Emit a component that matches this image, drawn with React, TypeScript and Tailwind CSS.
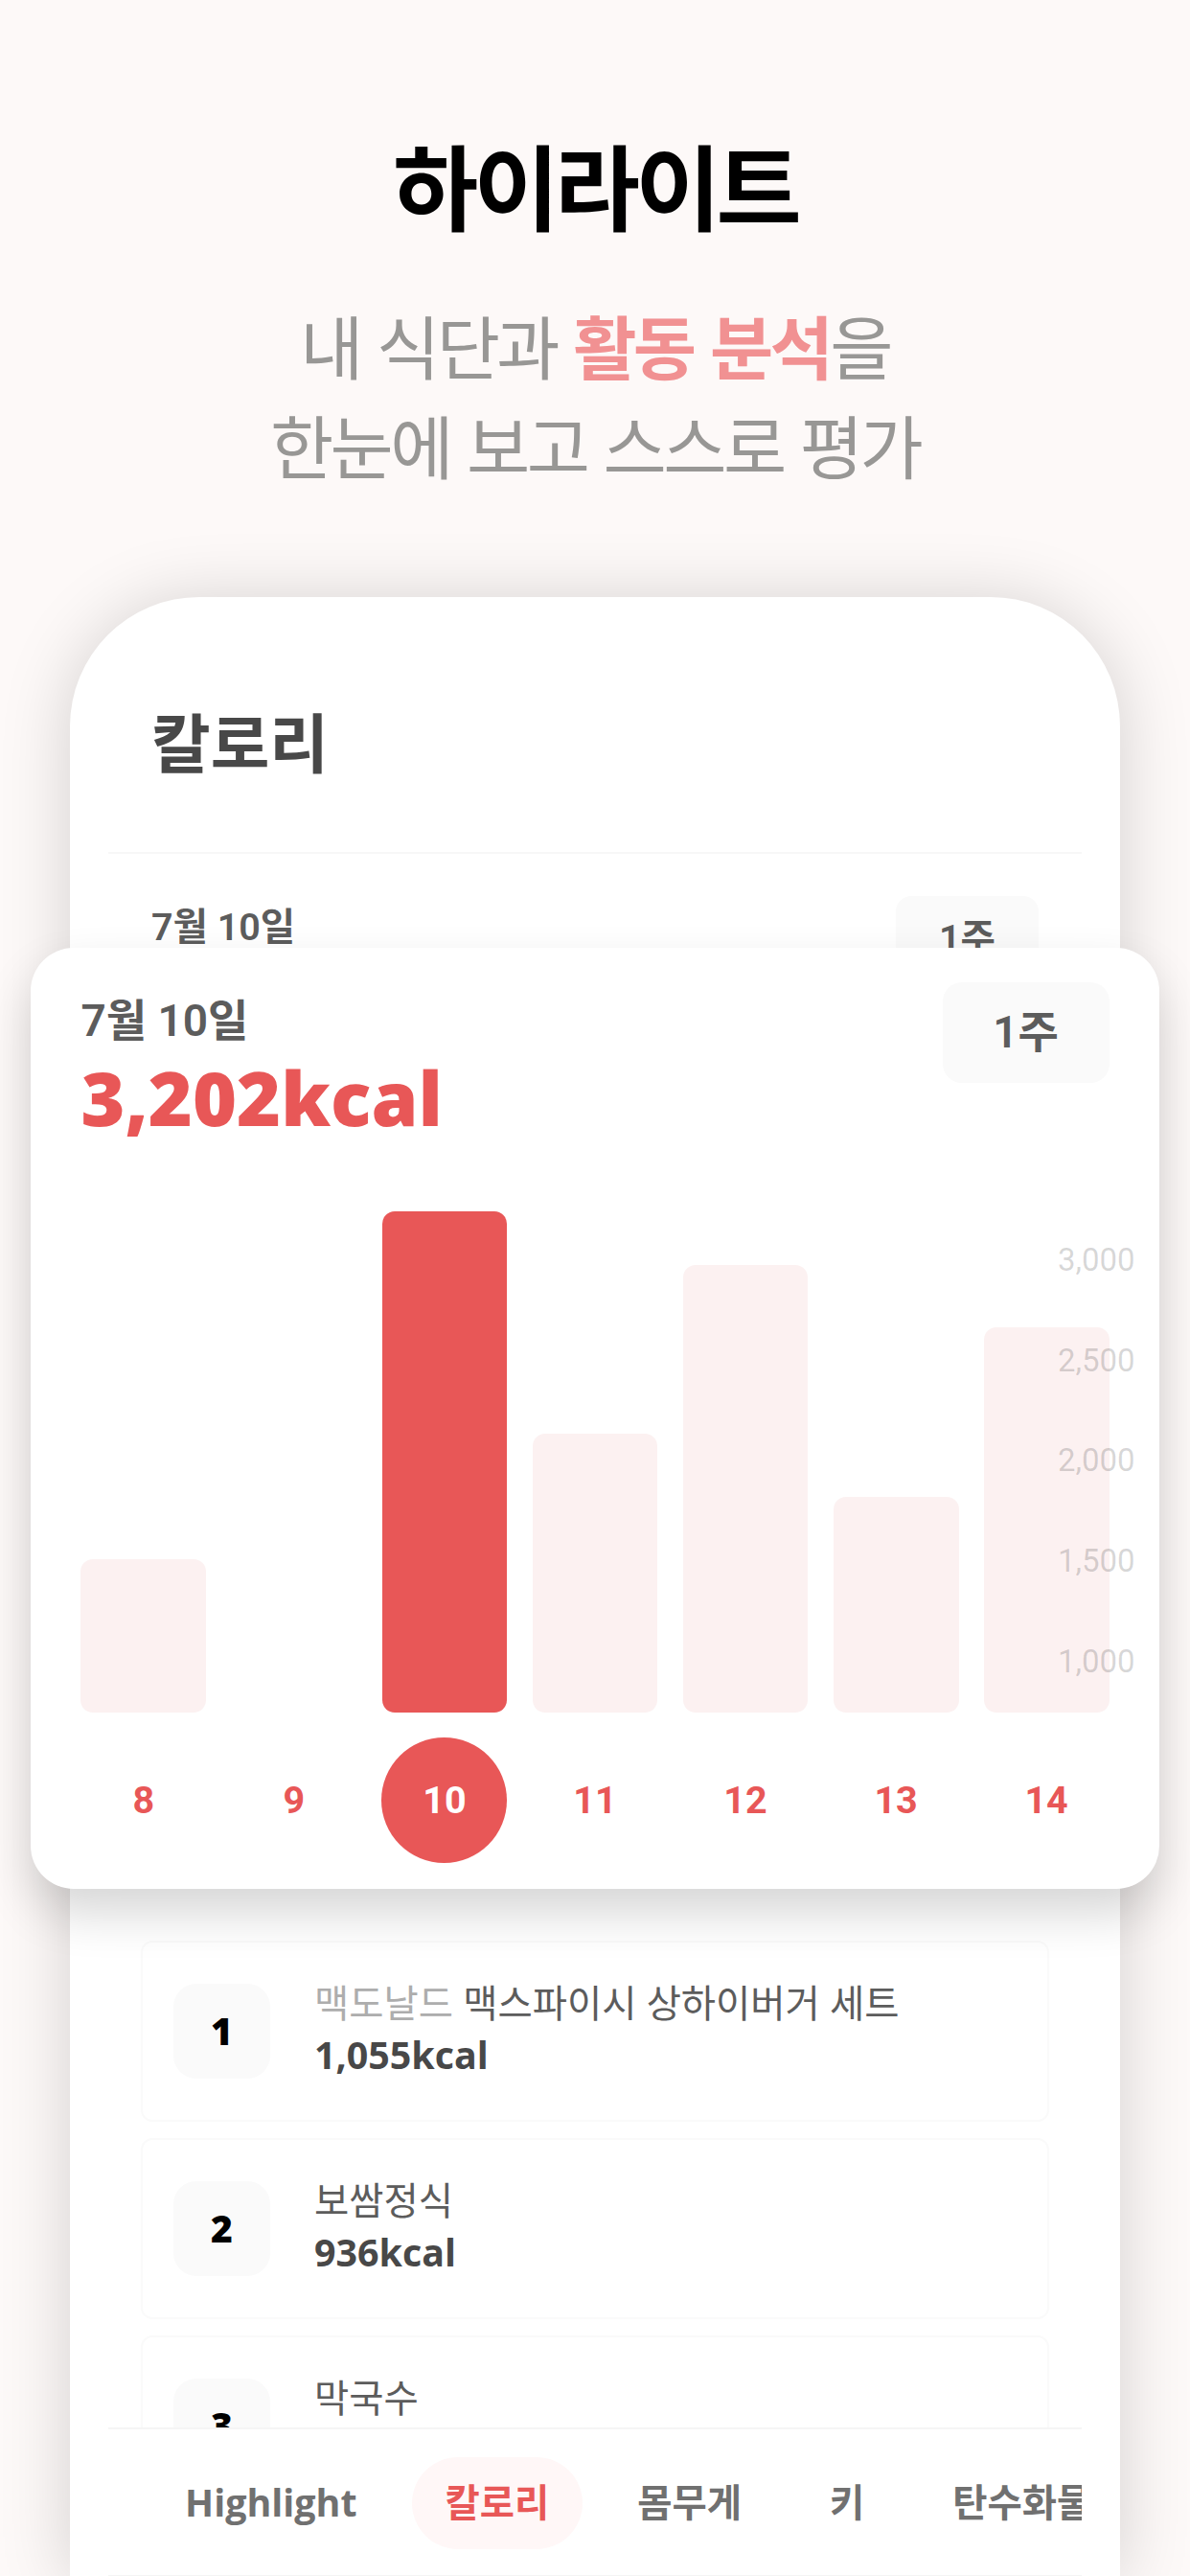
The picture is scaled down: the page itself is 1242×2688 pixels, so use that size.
import clsx from "clsx";
import { useState } from "react";

interface Day {
  day: number;
  /** bar height in px, 0 when nothing was logged */
  height: number;
}

interface Meal {
  brand?: string;
  name: string;
  kcal: string;
}

const DAYS: Day[] = [
  { day: 8, height: 160 },
  { day: 9, height: 0 },
  { day: 10, height: 523 },
  { day: 11, height: 291 },
  { day: 12, height: 467.5 },
  { day: 13, height: 225 },
  { day: 14, height: 402 },
];

const AXIS = ["3,000", "2,500", "2,000", "1,500", "1,000"];

const MEALS: Meal[] = [
  { brand: "맥도날드", name: "맥스파이시 상하이버거 세트", kcal: "1,055kcal" },
  { name: "보쌈정식", kcal: "936kcal" },
  { name: "막국수", kcal: "780kcal" },
];

const TABS = ["Highlight", "칼로리", "몸무게", "키", "탄수화물"];

const Heading = () => (
  <header className="flex flex-col items-center pt-[142px] text-center font-['Noto_Sans_CJK_KR',sans-serif]">
    <h1 className="text-[97px] leading-[97px] font-bold tracking-[-0.05em] text-black">
      하이라이트
    </h1>
    <p className="mt-[68px] text-[72px] leading-[104px] tracking-[-0.05em] text-[#989795] [word-spacing:4.7px]">
      내 식단과 <b className="font-bold text-[#f19192]">활동 분석</b>을
      <br />
      한눈에 보고 스스로 평가
    </p>
  </header>
);

const MealRow = ({ rank, meal }: { rank: number; meal: Meal }) => (
  <li className="flex h-[189.3px] shrink-0 rounded-xl border-2 border-[#fafafa] pt-[43px] pl-[32px]">
    <div className="flex h-[99px] w-[101px] items-center justify-center rounded-3xl bg-[#fafafa] text-[39px] font-extrabold text-black">
      {rank}
    </div>
    <div className="ml-[46px]">
      <p className="text-[39.4px] leading-[40px] text-[#5c5c5c]">
        {meal.brand && <span className="text-[#adadad]">{meal.brand} </span>}
        {meal.name}
      </p>
      <p className="mt-[14px] text-[39.4px] leading-[40px] font-bold text-[#484848]">
        {meal.kcal}
      </p>
    </div>
  </li>
);

const TabBar = () => {
  const [active, setActive] = useState("칼로리");

  return (
    <nav className="mx-[40px] flex h-[155px] shrink-0 gap-[22px] overflow-hidden border-t-2 border-b border-[#f5f5f5] pt-[28.5px] pl-[45px]">
      {TABS.map((tab) => (
        <button
          key={tab}
          type="button"
          onClick={() => setActive(tab)}
          className={clsx(
            "h-[96px] shrink-0 rounded-full px-[35px] text-[39.4px] font-bold whitespace-nowrap",
            tab === active ? "bg-[#fff7f7] text-[#e85757]" : "text-[#707070]",
          )}
        >
          {tab}
        </button>
      ))}
    </nav>
  );
};

const Phone = () => (
  <div className="mx-[73px] mt-[108px] flex h-[2065px] flex-col rounded-t-[135px] bg-white shadow-[0_4px_72px_rgba(0,0,0,0.17)]">
    <div className="mx-[40px] h-[268px] shrink-0 border-b-2 border-[#f7f7f7] pt-[119px] pl-[45px]">
      <h2 className="text-[67px] leading-[66px] font-bold text-[#484848]">칼로리</h2>
    </div>
    <div className="flex min-h-0 flex-1 flex-col overflow-hidden">
      <div className="flex h-[1133.5px] shrink-0 items-start justify-between pt-[44px] pr-[85px] pl-[85px]">
        <span className="mt-[13px] font-['Roboto','Noto_Sans_CJK_KR',sans-serif] text-[39.5px] leading-[40px] font-semibold text-[#5c5c5c]">
          7월 10일
        </span>
        <span className="flex h-[90px] w-[149px] items-center justify-center rounded-2xl bg-[#fafafa] font-['Roboto','Noto_Sans_CJK_KR',sans-serif] text-[39.5px] font-semibold text-[#5c5c5c]">
          1주
        </span>
      </div>
      <ol className="flex flex-col gap-[17px] px-[74px]">
        {MEALS.map((meal, i) => (
          <MealRow key={meal.name} rank={i + 1} meal={meal} />
        ))}
      </ol>
    </div>
    <TabBar />
  </div>
);

const CalorieCard = () => {
  const [selected, setSelected] = useState(10);

  return (
    <section className="absolute top-[989px] left-[32px] h-[982px] w-[1178px] rounded-[45px] bg-white px-[52.4px] pt-[36px] font-['Roboto','Noto_Sans_CJK_KR',sans-serif] shadow-[0_25px_50px_rgba(0,0,0,0.165)]">
      <div className="flex h-[239px] items-start justify-between">
        <div>
          <p className="mt-[17px] text-[46px] leading-[46px] font-semibold text-[#5c5c5c]">
            7월 10일
          </p>
          <p className="mt-[17px] font-['Open_Sans'] text-[78.7px] leading-[80px] font-extrabold text-[#e85757]">
            3,202kcal
          </p>
        </div>
        <button
          type="button"
          className="h-[105px] w-[174px] rounded-[20px] bg-[#fafafa] text-[46px] font-semibold text-[#5c5c5c]"
        >
          1주
        </button>
      </div>
      <div className="relative flex h-[523px] items-end justify-between">
        {DAYS.map(({ day, height }) => (
          <div
            key={day}
            className={clsx(
              "w-[130.8px] rounded-[13px]",
              day === selected ? "bg-[#e85757]" : "bg-[#fcf1f1]",
            )}
            style={{ height }}
          />
        ))}
        <div className="absolute top-[-1px] right-[-27px] flex flex-col text-right text-[33px] leading-[104.7px] text-black/17">
          {AXIS.map((label) => (
            <span key={label}>{label}</span>
          ))}
        </div>
      </div>
      <div className="mt-[26px] flex justify-between">
        {DAYS.map(({ day }) => (
          <button
            key={day}
            type="button"
            onClick={() => setSelected(day)}
            className={clsx(
              "size-[131px] rounded-full text-[39.5px] font-bold",
              day === selected ? "bg-[#e85757] text-white" : "text-[#e85757]",
            )}
          >
            {day}
          </button>
        ))}
      </div>
    </section>
  );
};

export default function App() {
  return (
    <main className="relative h-[2688px] w-[1242px] overflow-hidden bg-[#fdf9f8] font-['Open_Sans','Noto_Sans_CJK_KR',sans-serif]">
      <Heading />
      <Phone />
      <CalorieCard />
    </main>
  );
}
